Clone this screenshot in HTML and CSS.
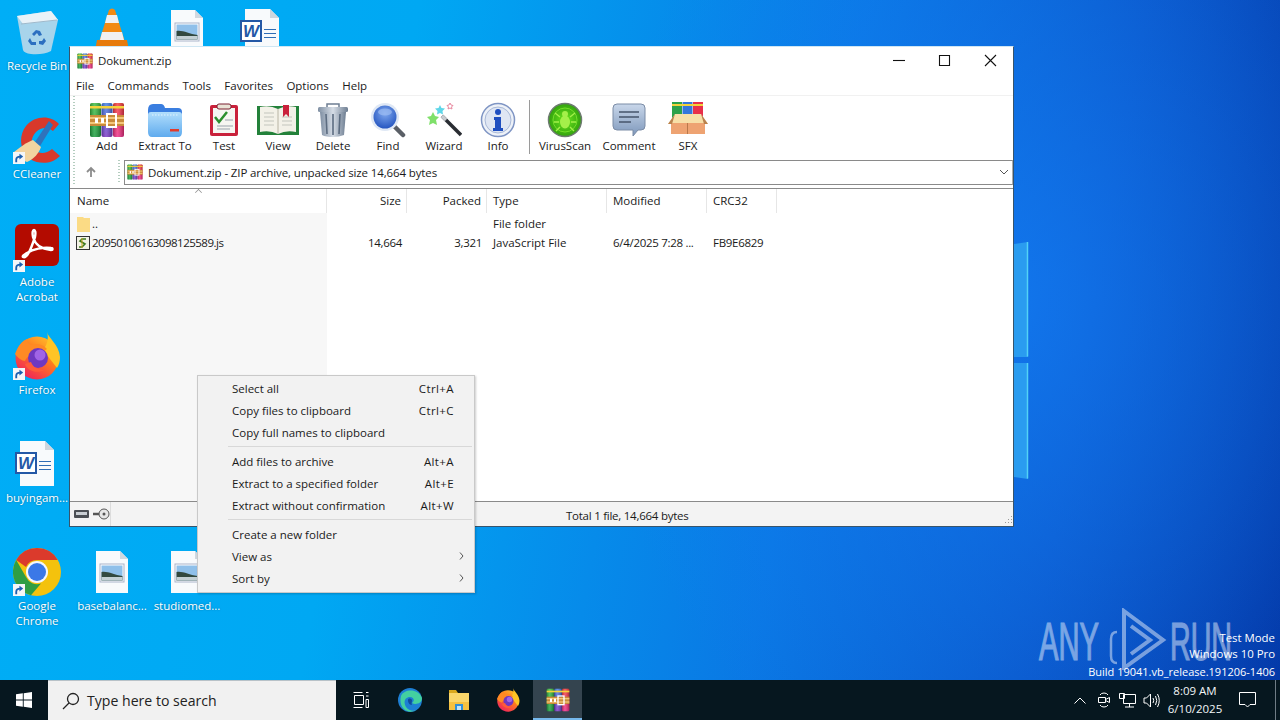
FILE: index.html
```html
<!DOCTYPE html>
<html lang="en">
<head>
<meta charset="utf-8">
<title>Dokument.zip - WinRAR</title>
<link rel="stylesheet" href="styles.css">
</head>
<body>
<svg class="defs" width="0" height="0" aria-hidden="true">
  <defs>
    <linearGradient id="gGreen" x1="0" y1="0" x2="0" y2="1"><stop offset="0" stop-color="#3dbb3f"/><stop offset="1" stop-color="#159a3a"/></linearGradient>
    <linearGradient id="gBlue" x1="0" y1="0" x2="0" y2="1"><stop offset="0" stop-color="#3f7fe6"/><stop offset="1" stop-color="#7a35c4"/></linearGradient>
    <linearGradient id="gRed" x1="0" y1="0" x2="0" y2="1"><stop offset="0" stop-color="#f63a36"/><stop offset="1" stop-color="#ee2a88"/></linearGradient>
    <linearGradient id="gShade" x1="0" y1="0" x2="1" y2="0"><stop offset="0" stop-color="#000" stop-opacity=".28"/><stop offset=".4" stop-color="#fff" stop-opacity=".18"/><stop offset="1" stop-color="#000" stop-opacity=".3"/></linearGradient>
    <linearGradient id="gFolder" x1="0" y1="0" x2="0" y2="1"><stop offset="0" stop-color="#b2defc"/><stop offset="1" stop-color="#5fabee"/></linearGradient>
    <linearGradient id="gMetal" x1="0" y1="0" x2="1" y2="0"><stop offset="0" stop-color="#7f8fa3"/><stop offset=".5" stop-color="#d6dde6"/><stop offset="1" stop-color="#6e7e92"/></linearGradient>
    <radialGradient id="gLens" cx=".5" cy=".35" r=".7"><stop offset="0" stop-color="#7fa8ee"/><stop offset="1" stop-color="#1f50bd"/></radialGradient>
    <radialGradient id="gBug" cx=".5" cy=".5" r=".55"><stop offset="0" stop-color="#6ee81e"/><stop offset="1" stop-color="#2c9a0c"/></radialGradient>
    <linearGradient id="gBubble" x1="0" y1="0" x2="0" y2="1"><stop offset="0" stop-color="#c9d7ea"/><stop offset="1" stop-color="#7d97bb"/></linearGradient>
    <linearGradient id="gFx" x1="1" y1="0" x2=".3" y2="1"><stop offset="0" stop-color="#ffd02e"/><stop offset=".5" stop-color="#ff7a1f"/><stop offset="1" stop-color="#f0245a"/></linearGradient>

    <symbol id="rar" viewBox="0 0 36 36">
      <rect x="1" y="1" width="11" height="34" rx="2" fill="url(#gGreen)"/>
      <rect x="12.500" y="1" width="11" height="34" rx="2" fill="url(#gBlue)"/>
      <rect x="24" y="1" width="11" height="34" rx="2" fill="url(#gRed)"/>
      <rect x="1" y="1" width="11" height="34" rx="2" fill="url(#gShade)"/>
      <rect x="12.500" y="1" width="11" height="34" rx="2" fill="url(#gShade)"/>
      <rect x="24" y="1" width="11" height="34" rx="2" fill="url(#gShade)"/>
      <rect x="1" y="4" width="34" height="2.500" fill="#f5d23c"/>
      <rect x="1" y="13" width="34" height="11" fill="#c98a3a"/>
      <rect x="1" y="15" width="34" height="2" fill="#f3c67a"/>
      <rect x="1" y="20" width="34" height="2" fill="#f3c67a"/>
      <rect x="18" y="12" width="9" height="13" fill="none" stroke="#fff" stroke-width="2"/>
      <rect x="6" y="16" width="3" height="5" fill="#fff"/>
      <rect x="12" y="16" width="3" height="5" fill="#fff"/>
    </symbol>

    <symbol id="shortcut" viewBox="0 0 13 13">
      <rect width="13" height="13" fill="#f4f6f8"/>
      <path d="M3.500 11V8.500C3.500 6 5 5 8 5" fill="none" stroke="#1d5fb0" stroke-width="2"/>
      <path d="M7 2l4 3-4 3z" fill="#1d5fb0"/>
    </symbol>

    <symbol id="imgdoc" viewBox="0 0 32 42">
      <path d="M0 0H24L32 8V42H0z" fill="#f8fafc"/>
      <path d="M24 0L32 8H24z" fill="#d0d8e0"/>
      <rect x="4" y="13" width="24" height="18" fill="#fff" stroke="#a9b3c9"/>
      <rect x="5.500" y="14.500" width="21" height="15" fill="#8fc0ea"/>
      <path d="M5.500 21C12 20 18 24 26.500 25V29.500H5.500z" fill="#32493f"/>
      <path d="M5.500 26H26.500V29.500H5.500z" fill="#c3d0d4"/>
    </symbol>

    <symbol id="worddoc" viewBox="0 0 40 45">
      <path d="M5 0H30L39 9V45H5z" fill="#f8fafc"/>
      <path d="M30 0L39 9H30z" fill="#cfd6dd"/>
      <g stroke="#2f6db5" stroke-width="1"><path d="M24 20.500H36M24 24.500H36M24 28.500H36"/></g>
      <rect x="1" y="12" width="20" height="20" fill="#fff" stroke="#2458a6" stroke-width="2"/>
      <text x="11" y="28" class="wordw">W</text>
    </symbol>

    <symbol id="firefox" viewBox="0 0 48 48">
      <circle cx="24" cy="26" r="21.500" fill="url(#gFx)"/>
      <path d="M34 0c1 6 12 12 13 25 0 4-1 8-3 11L30 18C34 13 36 7 34 0z" fill="#ffc425"/>
      <path d="M2 22C5 14 9 9 14 7c0 3 2 5 4 6 5-2 12-1 16 4l-8 6c-6-2-12 1-14 6-3 0-7-3-10-7z" fill="#ff8a24"/>
      <circle cx="25" cy="26" r="10" fill="#6f38c0"/>
      <circle cx="27" cy="23" r="5.500" fill="#a064e6"/>
      <path d="M12 32c2 7 12 10 20 6-6 0-12-2-14-8z" fill="#ff5b3a"/>
    </symbol>
  </defs>
</svg>

<div class="screen">
  <main class="wall">
    <svg class="beams" viewBox="0 0 18 240" aria-hidden="true">
      <path d="M0 3L14 1V116H0z" class="pane"/>
      <path d="M13.500 1V115.500" class="pane-edge"/>
      <path d="M0 122H14V238L0 236z" class="pane"/>
      <path d="M13.500 122V237.500" class="pane-edge"/>
    </svg>

    <div class="dicon at-recycle">
      <svg class="dglyph" viewBox="0 0 48 48" aria-hidden="true">
        <path d="M4 8L38 3L45 12L38 43Q30 47 18 46Q11 45 10 42z" fill="#c6dbe9" fill-opacity=".85"/>
        <path d="M4 8L38 3L45 12L10 16z" fill="#e9f2f8"/>
        <path d="M8 16L44 12" stroke="#9fb9cb" fill="none"/>
        <path d="M23 22l4 1 2 4-3 1-2-3-3 3-2-2zM31 30l2 3-3 4-4-1v-3h3zM17 30l2 4 4 0 0 3-5 0-3-4z" fill="#2c6fc0"/>
      </svg>
      <span class="dlabel">Recycle Bin</span>
    </div>
    <div class="dicon at-vlc">
      <svg class="dglyph" viewBox="0 0 48 48" aria-hidden="true">
        <path d="M21 2Q24 -1 27 2L37 34H11z" fill="#f28a12"/>
        <path d="M19 7H29L31 15H17z" fill="#f0f0f0"/>
        <path d="M14 24H34L36 32H12z" fill="#f0f0f0"/>
        <path d="M9 32H39L42 48H6z" fill="#e77b0c"/>
      </svg>
    </div>
    <div class="dicon at-img1"><svg class="dglyph-doc" aria-hidden="true"><use href="#imgdoc"/></svg></div>
    <div class="dicon at-word1"><svg class="dglyph-word" aria-hidden="true"><use href="#worddoc"/></svg></div>

    <div class="dicon at-ccleaner">
      <div class="dbox">
        <svg class="dglyph" viewBox="0 0 48 48" aria-hidden="true">
          <path d="M46 8C38-1 22-1 13 10 5 20 7 36 17 43c10 6 22 5 30-3l-8-7c-6 5-13 5-17 1-5-5-4-13 1-18 5-5 12-5 17-1z" fill="#d8392b"/>
          <path d="M36 5L22 26l5 4L40 9z" fill="#2f73bb"/>
          <path d="M20 24c-6 2-14 8-19 12 2 4 8 8 13 10 7-3 12-9 14-15z" fill="#f2d4a0"/>
        </svg>
        <svg class="shortcut" aria-hidden="true"><use href="#shortcut"/></svg>
      </div>
      <span class="dlabel">CCleaner</span>
    </div>
    <div class="dicon at-acrobat">
      <div class="dbox">
        <svg class="dglyph" viewBox="0 0 48 48" aria-hidden="true">
          <rect x="2" y="0" width="44" height="42" rx="6" fill="#b30b00"/>
          <path d="M10 33c4 2 8-8 12-20 1-5 0-7-1-7s-2 2-1 7c2 7 7 12 18 13 2 0 2-2 0-2-8-1-18 1-24 5-3 2-5 3-4 4z" fill="none" stroke="#fff" stroke-width="2.400"/>
        </svg>
        <svg class="shortcut" aria-hidden="true"><use href="#shortcut"/></svg>
      </div>
      <span class="dlabel">Adobe<br>Acrobat</span>
    </div>
    <div class="dicon at-firefox">
      <div class="dbox">
        <svg class="dglyph" aria-hidden="true"><use href="#firefox"/></svg>
        <svg class="shortcut" aria-hidden="true"><use href="#shortcut"/></svg>
      </div>
      <span class="dlabel">Firefox</span>
    </div>
    <div class="dicon at-word2">
      <svg class="dglyph-word" aria-hidden="true"><use href="#worddoc"/></svg>
      <span class="dlabel">buyingam...</span>
    </div>
    <div class="dicon at-chrome">
      <div class="dbox">
        <svg class="dglyph" viewBox="0 0 48 48" aria-hidden="true">
          <circle cx="24" cy="24" r="24" fill="#f4c20d"/>
          <path d="M24 0A24 24 0 0 1 44.800 12H24A12 12 0 0 0 13 19L3.200 12A24 24 0 0 1 24 0z" fill="#db3a2c"/>
          <path d="M3.200 12L13 29A12 12 0 0 0 28 35.500L18 47.300A24 24 0 0 1 3.200 12z" fill="#2f9e44"/>
          <circle cx="24" cy="24" r="11" fill="#f5f7fb"/>
          <circle cx="24" cy="24" r="9" fill="#3b78e7"/>
        </svg>
        <svg class="shortcut" aria-hidden="true"><use href="#shortcut"/></svg>
      </div>
      <span class="dlabel">Google<br>Chrome</span>
    </div>
    <div class="dicon at-img2">
      <svg class="dglyph-doc" aria-hidden="true"><use href="#imgdoc"/></svg>
      <span class="dlabel">basebalanc...</span>
    </div>
    <div class="dicon at-img3">
      <svg class="dglyph-doc" aria-hidden="true"><use href="#imgdoc"/></svg>
      <span class="dlabel">studiomed...</span>
    </div>

    <div class="watermark">
      <span class="wm-word wm-any">ANY</span>
      <svg class="wm-svg" viewBox="0 0 60 62" aria-hidden="true">
        <path d="M8 24Q2 24 2 31V48Q2 55 8 55" class="wm-line"/>
        <path d="M15 3L54 32L15 60zM22 18L41 32L22 46" class="wm-line wm-thick"/>
      </svg>
      <span class="wm-word wm-run">RUN</span>
    </div>
    <div class="testmode">
      <div>Test Mode</div>
      <div>Windows 10 Pro</div>
      <div class="build">Build 19041.vb_release.191206-1406</div>
    </div>

    <section class="window">
      <header class="titlebar">
        <svg class="ico16" aria-hidden="true"><use href="#rar"/></svg>
        <span class="title">Dokument.zip</span>
        <div class="winctl">
          <svg class="ctl" viewBox="0 0 46 20" aria-hidden="true"><path d="M18 10.500H30"/></svg>
          <svg class="ctl" viewBox="0 0 46 20" aria-hidden="true"><path d="M18.500 5.500H28.500V15.500H18.500z"/></svg>
          <svg class="ctl" viewBox="0 0 46 20" aria-hidden="true"><path d="M18 5L29 16M29 5L18 16"/></svg>
        </div>
      </header>
      <nav class="menubar">
        <span>File</span><span>Commands</span><span>Tools</span><span>Favorites</span><span>Options</span><span>Help</span>
      </nav>
      <div class="toolbar">
        <div class="tool">
          <svg class="tico" aria-hidden="true"><use href="#rar"/></svg>
          <span>Add</span>
        </div>
        <div class="tool">
          <svg class="tico" viewBox="0 0 36 36" aria-hidden="true">
            <path d="M1 8Q1 2 6 2H14Q17 2 18 6H31Q35 6 35 10V30H1z" fill="#3a7ee0"/>
            <path d="M1 13Q1 10 4 10H32Q35 10 35 13V30Q35 35 31 35H5Q1 35 1 30z" fill="url(#gFolder)"/>
            <path d="M5 13H31" stroke="#e2f2fd" stroke-dasharray="1.500 1.500" fill="none"/>
            <rect x="23" y="27" width="9" height="2.500" fill="#e23a2a"/>
          </svg>
          <span>Extract To</span>
        </div>
        <div class="tool">
          <svg class="tico" viewBox="0 0 36 36" aria-hidden="true">
            <rect x="4" y="3" width="28" height="31" rx="2" fill="#c9213b"/>
            <rect x="7" y="6" width="22" height="25" fill="#f6f6f2"/>
            <rect x="11" y="2" width="14" height="5" rx="2" fill="#e9e3d6" stroke="#7a2030"/>
            <path d="M9 15L13 20L21 10" fill="none" stroke="#2b8f2e" stroke-width="2.500"/>
            <path d="M19 18H27M11 24H27M11 27H24" stroke="#9aa3ad"/>
          </svg>
          <span>Test</span>
        </div>
        <div class="tool">
          <svg class="tico tico-view" viewBox="0 0 44 36" aria-hidden="true">
            <path d="M1 4H43V33H1z" fill="#23813a"/>
            <path d="M4 5Q14 3 22 7Q30 3 40 5V30Q30 28 22 32Q14 28 4 30z" fill="#f3f1e8"/>
            <path d="M22 7V32" stroke="#b8b4a4"/>
            <path d="M8 11H18M8 15H18M8 19H18M8 23H18M26 15H36M26 19H36M26 23H36" stroke="#c3c5bd"/>
            <path d="M27 3H33V15L30 12L27 15z" fill="#c9213b"/>
          </svg>
          <span>View</span>
        </div>
        <div class="tool">
          <svg class="tico" viewBox="0 0 36 36" aria-hidden="true">
            <path d="M12 5V2H24V5" fill="none" stroke="#6e7e92" stroke-width="1.500"/>
            <rect x="3" y="5" width="30" height="5" rx="1.500" fill="url(#gMetal)"/>
            <path d="M5 10H31L29 33Q24 35 18 35Q11 35 7 33z" fill="url(#gMetal)"/>
            <path d="M11 12L12 32M18 12V33M25 12L24 32" stroke="#5c6c80" stroke-width="1.600"/>
          </svg>
          <span>Delete</span>
        </div>
        <div class="tool">
          <svg class="tico" viewBox="0 0 36 36" aria-hidden="true">
            <path d="M23 23L33 33" stroke="#5a5f66" stroke-width="4.500" stroke-linecap="round"/>
            <circle cx="15" cy="15" r="14" fill="#dfe8f5"/>
            <circle cx="15" cy="15" r="11.500" fill="url(#gLens)"/>
            <ellipse cx="15" cy="10" rx="7" ry="3.500" fill="#9dbcf2" fill-opacity=".7"/>
          </svg>
          <span>Find</span>
        </div>
        <div class="tool">
          <svg class="tico" viewBox="0 0 36 36" aria-hidden="true">
            <path d="M16 14L35 33" stroke="#2a2d33" stroke-width="3.500"/>
            <path d="M16 14L20 18" stroke="#c9ccd1" stroke-width="3.500"/>
            <path transform="translate(-2 -4)" d="M9 14l2 4 4 1-3 3 1 5-4-2-4 2 1-5-3-3 4-1z" fill="#7fe06a"/>
            <path transform="translate(-6 0)" d="M20 3l1.500 3 3.500.5-2.500 2.500.5 3.500-3-1.500-3 1.500.5-3.500L15 6.500l3.500-.5z" fill="#5fd6e8"/>
            <path transform="translate(-6 0)" d="M30 1l1 2 2 .5-1.500 1.500.5 2-2-1-2 1 .5-2L27 3.500l2-.5z" fill="none" stroke="#e88aa0"/>
          </svg>
          <span>Wizard</span>
        </div>
        <div class="tool">
          <svg class="tico" viewBox="0 0 36 36" aria-hidden="true">
            <circle cx="18" cy="18" r="16.500" fill="#eef2f8" stroke="#7f95c4" stroke-width="1.500"/>
            <circle cx="18" cy="18" r="13" fill="#dfe6f3" stroke="#a9b9d8"/>
            <circle cx="18" cy="10" r="3" fill="#1f4fc0"/>
            <path d="M14 15H21V26H23V29H13V26H15V18H14z" fill="#1f4fc0"/>
          </svg>
          <span>Info</span>
        </div>
        <div class="tsep"></div>
        <div class="tool">
          <svg class="tico" viewBox="0 0 36 36" aria-hidden="true">
            <circle cx="18" cy="18" r="16.500" fill="url(#gBug)" stroke="#6d7a70" stroke-width="1.500"/>
            <circle cx="18" cy="18" r="12" fill="none" stroke="#7fe830" stroke-width=".8"/>
            <ellipse cx="18" cy="20" rx="5" ry="6.500" fill="#a4f04a"/>
            <circle cx="18" cy="12" r="3" fill="#a4f04a"/>
            <path d="M13 15L8 11M23 15L28 11M12 20H7M24 20H29M13 25L9 29M23 25L27 29" stroke="#a4f04a" stroke-width="1.400"/>
          </svg>
          <span>VirusScan</span>
        </div>
        <div class="tool">
          <svg class="tico" viewBox="0 0 36 36" aria-hidden="true">
            <path d="M6 2H30Q34 2 34 6V24Q34 28 30 28H27L22 34V28H6Q2 28 2 24V6Q2 2 6 2z" fill="url(#gBubble)" stroke="#7b8ca6"/>
            <path d="M8 10H28M8 15H28M8 20H20" stroke="#45546b" stroke-width="1.600"/>
          </svg>
          <span>Comment</span>
        </div>
        <div class="tool">
          <svg class="tico tico-wide" viewBox="0 0 42 36" aria-hidden="true">
            <rect x="5" y="0" width="10" height="16" fill="#2ca24a"/>
            <rect x="15.500" y="0" width="10" height="16" fill="#3477dc"/>
            <rect x="26" y="0" width="10" height="16" fill="#e8304a"/>
            <rect x="5" y="2" width="31" height="2" fill="#f2d23c"/>
            <path d="M8 12H34L41 22H1z" fill="#f7dfa8"/>
            <path d="M4 21H38V32H4z" fill="#eea372"/>
            <path d="M8 12L1 22H5zM34 12L41 22H37z" fill="#b9824e"/>
            <path d="M20.500 21V32" stroke="#b9784a"/>
          </svg>
          <span>SFX</span>
        </div>
      </div>

      <div class="addressrow">
        <svg class="uparrow" viewBox="0 0 12 12" aria-hidden="true"><path d="M6 11V2M2 6L6 2L10 6"/></svg>
        <div class="agrip"></div>
        <div class="combo">
          <svg class="ico16" aria-hidden="true"><use href="#rar"/></svg>
          <span class="combotext">Dokument.zip - ZIP archive, unpacked size 14,664 bytes</span>
          <svg class="combochev" viewBox="0 0 10 6" aria-hidden="true"><path d="M1 1L5 5L9 1"/></svg>
        </div>
      </div>

      <div class="listing">
        <div class="lrow lhead">
          <div class="cell first"><span class="sortup"></span>Name</div>
          <div class="cell num">Size</div>
          <div class="cell num">Packed</div>
          <div class="cell">Type</div>
          <div class="cell">Modified</div>
          <div class="cell">CRC32</div>
        </div>
        <div class="lbody">
          <div class="lrow">
            <div class="cell first"><svg class="ico16 fold" viewBox="0 0 16 16" aria-hidden="true"><path d="M2 1H8L9 2H15V16H2z" fill="#fbdb85"/></svg>..</div>
            <div class="cell num"></div><div class="cell num"></div>
            <div class="cell">File folder</div><div class="cell"></div><div class="cell"></div>
          </div>
          <div class="lrow">
            <div class="cell first"><svg class="ico16 fold" viewBox="0 0 16 16" aria-hidden="true"><rect x="1.500" y="1.500" width="13" height="13" fill="#f2f2e4" stroke="#333"/><path d="M11 4H7L5 6L10 9L7 12H4" fill="none" stroke="#3c7a1e" stroke-width="1.600"/><path d="M7 3V13" stroke="#c9a21c"/></svg><span class="t-name">20950106163098125589.js</span></div>
            <div class="cell num t-num">14,664</div>
            <div class="cell num t-num">3,321</div>
            <div class="cell">JavaScript File</div>
            <div class="cell t-num">6/4/2025 7:28 ...</div>
            <div class="cell t-num">FB9E6829</div>
          </div>
        </div>
      </div>

      <footer class="statusbar">
        <div class="st-icons">
          <svg class="st-svg" viewBox="0 0 36 14" aria-hidden="true">
            <rect x="0" y="3" width="15" height="8" rx="1" fill="#4b4f54"/>
            <rect x="2" y="5" width="11" height="3" fill="#c9ced3"/>
            <path d="M19 7H27" stroke="#555" stroke-width="2.500"/>
            <circle cx="30" cy="7" r="5" fill="#e6e6e6" stroke="#555"/>
            <circle cx="30" cy="7" r="1.500" fill="#555"/>
          </svg>
        </div>
        <div class="st-total">Total 1 file, 14,664 bytes</div>
        <svg class="st-grip" viewBox="0 0 10 10" aria-hidden="true">
          <path d="M8 1h1v1H8zM5 4h1v1H5zM8 4h1v1H8zM2 7h1v1H2zM5 7h1v1H5zM8 7h1v1H8z" fill="#9a9a9a"/>
        </svg>
      </footer>
    </section>

    <div class="menu">
      <div class="mitem"><span>Select all</span><span class="key">Ctrl+A</span></div>
      <div class="mitem"><span>Copy files to clipboard</span><span class="key">Ctrl+C</span></div>
      <div class="mitem"><span>Copy full names to clipboard</span></div>
      <div class="msep"></div>
      <div class="mitem"><span>Add files to archive</span><span class="key">Alt+A</span></div>
      <div class="mitem"><span>Extract to a specified folder</span><span class="key">Alt+E</span></div>
      <div class="mitem"><span>Extract without confirmation</span><span class="key">Alt+W</span></div>
      <div class="msep"></div>
      <div class="mitem"><span>Create a new folder</span></div>
      <div class="mitem"><span>View as</span><svg class="msub" viewBox="0 0 5 8" aria-hidden="true"><path d="M1 0.500L4 4L1 7.500"/></svg></div>
      <div class="mitem"><span>Sort by</span><svg class="msub" viewBox="0 0 5 8" aria-hidden="true"><path d="M1 0.500L4 4L1 7.500"/></svg></div>
    </div>
  </main>

  <footer class="taskbar">
    <div class="start">
      <svg class="startlogo" viewBox="0 0 16 16" aria-hidden="true"><path d="M0 2.300L6.800 1.300V7.500H0zM7.700 1.200L16 0V7.500H7.700zM0 8.400H6.800V14.700L0 13.700zM7.700 8.400H16V16L7.700 14.800z" fill="#fff"/></svg>
    </div>
    <div class="search">
      <svg class="searchico" viewBox="0 0 18 18" aria-hidden="true"><circle cx="11" cy="7" r="5.500"/><path d="M7 11L1 17"/></svg>
      <span>Type here to search</span>
    </div>
    <div class="tasks">
      <div class="task">
        <svg class="taskview" viewBox="0 0 16 16" aria-hidden="true"><path d="M0.500 0.500H9.500M0.500 15.500H9.500M1.500 3.500H10.500V12.500H1.500zM13 0.500H15.500M13 4H15.500M13 7.500H15.500V15.500H13z"/></svg>
      </div>
      <div class="task">
        <svg class="tkico" viewBox="0 0 24 24" aria-hidden="true">
          <circle cx="12" cy="12" r="12" fill="#1d7fd4"/>
          <path d="M3 8C6 1 20 0 24 10C24 16 17 17 14 15C17 13 16 9 12 9C7 9 5 14 8 19C10 22 15 24 18 22C10 27 0 20 3 8z" fill="#43d0a0"/>
          <path d="M10 12C10 10 13 10 14 12C14 14 13 16 14 17C11 17 10 14 10 12z" fill="#0f4d9c"/>
        </svg>
      </div>
      <div class="task">
        <svg class="tkico" viewBox="0 0 24 24" aria-hidden="true">
          <path d="M2 2H9L11 5H22V10H2z" fill="#d9a81e"/>
          <rect x="2" y="5" width="20" height="17" fill="#f9d66a"/>
          <rect x="2" y="14" width="20" height="8" fill="#f4c141"/>
          <path d="M8 16H16V22H8z" fill="#2f8fd8"/>
          <rect x="10" y="18" width="4" height="4" fill="#bfe3f8"/>
        </svg>
      </div>
      <div class="task">
        <svg class="tkico" aria-hidden="true"><use href="#firefox"/></svg>
      </div>
      <div class="task active">
        <svg class="tkico" aria-hidden="true"><use href="#rar"/></svg>
      </div>
    </div>
    <div class="tray">
      <svg class="tr tr-chev" viewBox="0 0 12 7" aria-hidden="true"><path d="M0.500 6.500L6 1L11.500 6.500"/></svg>
      <svg class="tr tr-meet" viewBox="0 0 16 16" aria-hidden="true"><path d="M4 3Q5 1 8 1T12 3M4 13Q5 15 8 15T12 13M2.500 5.500H9.500V10.500H2.500zM9.500 7.500L13.500 5.500V10.500L9.500 8.500"/></svg>
      <svg class="tr tr-net" viewBox="0 0 17 15" aria-hidden="true"><path d="M4.500 1.500H16.500V10.500H4.500zM10.500 10.500V14M6 14H15M0.500 0.500H5.500V5.500H0.500z"/></svg>
      <svg class="tr tr-vol" viewBox="0 0 17 15" aria-hidden="true"><path d="M1 5H3.500L7.500 1V14L3.500 10H1zM10 5Q11.500 7.500 10 10M12.500 3Q15 7.500 12.500 12M14.500 1Q18 7.500 14.500 14"/></svg>
      <div class="clock"><div>8:09 AM</div><div>6/10/2025</div></div>
      <svg class="tr tr-note" viewBox="0 0 17 16" aria-hidden="true"><path d="M0.500 0.500H16.500V12.500H11L8.500 15L6 12.500H0.500z"/></svg>
      <div class="showdesk"></div>
    </div>
  </footer>
</div>
</body>
</html>
```

FILE: styles.css
```css
* { box-sizing: border-box; }
html, body { margin: 0; padding: 0; }
body {
  width: 1280px;
  height: 720px;
  overflow: hidden;
  font-family: "Open Sans", "Noto Sans", sans-serif;
  font-size: 11.500px;
  color: #1a1a1a;
}
.defs { position: absolute; }
.wordw { font: italic bold 17px "Liberation Sans", sans-serif; fill: #2458a6; text-anchor: middle; }

.screen { width: 1280px; height: 720px; display: flex; flex-direction: column; }
.wall {
  position: relative;
  flex: 1;
  overflow: hidden;
  background:
    radial-gradient(ellipse 420px 520px at 1010px 300px, rgba(20,125,245,.75), rgba(20,125,245,0) 100%),
    linear-gradient(100deg, #00aef6 0%, #00a8f3 30%, #0a78e4 62%, #0a55c8 82%, #0337a6 100%);
}
.beams { position: absolute; left: 1014px; top: 241px; width: 18px; height: 240px; }
.pane { fill: #2a9cf0; }
.pane-edge { stroke: #52d2f6; stroke-width: 1.500; fill: none; }

/* desktop icons */
.dicon {
  position: absolute;
  width: 76px;
  display: flex;
  flex-direction: column;
  align-items: center;
  color: #fff;
}
.dglyph { width: 48px; height: 48px; display: block; }
.dglyph-doc { width: 32px; height: 42px; margin: 3px 0 3px; display: block; }
.dglyph-word { width: 40px; height: 45px; margin: 1px 0 2px -4px; display: block; }
.dbox { position: relative; width: 48px; height: 48px; }
.shortcut { position: absolute; left: 0; bottom: 0; width: 12px; height: 12px; }
.dlabel {
  margin-top: 2px;
  line-height: 15px;
  font-size: 11.500px;
  text-align: center;
  white-space: nowrap;
  text-shadow: 0 0 2px rgba(0,0,0,.35);
}
.at-recycle { left: -1px; top: 8px; }
.at-vlc { left: 74px; top: 8px; }
.at-img1 { left: 149px; top: 7px; }
.at-word1 { left: 224px; top: 8px; }
.at-ccleaner { left: -1px; top: 116px; }
.at-acrobat { left: -1px; top: 224px; }
.at-firefox { left: -1px; top: 332px; }
.at-word2 { left: -1px; top: 440px; }
.at-chrome { left: -1px; top: 548px; }
.at-img2 { left: 74px; top: 548px; }
.at-img3 { left: 149px; top: 548px; }

/* watermark + build text */
.watermark { position: absolute; left: 1039px; top: 608px; width: 195px; height: 62px; opacity: .45; color: #fff; }
.wm-svg { position: absolute; left: 70px; top: 0; width: 60px; height: 62px; display: block; }
.wm-word {
  position: absolute;
  top: 2px;
  font: 54px/62px "Liberation Sans", sans-serif;
  -webkit-text-stroke: 1.200px #fff;
  transform-origin: 0 0;
  white-space: nowrap;
}
.wm-any { left: 0; transform: scaleX(.54); }
.wm-run { left: 131px; transform: scaleX(.53); }
.wm-line { fill: none; stroke: #fff; stroke-width: 2.500; }
.wm-thick { stroke-width: 4; }
.testmode {
  position: absolute;
  right: 5px;
  top: 630px;
  text-align: right;
  color: #fff;
  font-size: 11.400px;
  line-height: 16px;
}
.build { margin-top: 2px; font-size: 11px; }

/* window */
.window {
  position: absolute;
  left: 69px;
  top: 46px;
  width: 945px;
  height: 481px;
  background: #fff;
  border: 1px solid #37546c;
  border-top-color: #cfe6f3;
  display: flex;
  flex-direction: column;
}
.titlebar { height: 27px; display: flex; align-items: center; padding-left: 7px; flex: none; }
.ico16 { width: 16px; height: 16px; flex: none; display: block; }
.title { margin-left: 5px; letter-spacing: -.14px; }
.winctl { margin-left: auto; display: flex; }
.ctl { width: 46px; height: 20px; display: block; margin-top: -2px; }
.ctl path { fill: none; stroke: #111; stroke-width: 1.100; }
.menubar { height: 22px; display: flex; align-items: center; padding: 2px 0 0 6px; gap: 13.400px; flex: none; border-bottom: 1px solid #f1f1f1; }
.toolbar {
  height: 63px;
  flex: none;
  margin-left: 3px;
  padding-left: 7px;
  display: grid;
  grid-template-columns: 54px 62px 56px 52px 58px 52px 60px 48px 14px 58px 70px 48px;
  grid-template-rows: 1fr;
  background-image: repeating-linear-gradient(#b4cdbf 0 1px, transparent 1px 3px);
  background-size: 2px 100%;
  background-repeat: no-repeat;
}
.tool { display: flex; flex-direction: column; align-items: center; padding-top: 6px; }
.tool span { line-height: 16px; white-space: nowrap; }
.tico { width: 36px; height: 36px; display: block; }
.tico-wide { width: 42px; }
.tico-view { width: 44px; }
.tsep { width: 1px; height: 54px; margin: 4px auto 0; background: #9a9a9a; }

.addressrow {
  height: 26px;
  flex: none;
  display: flex;
  align-items: center;
  background-image: repeating-linear-gradient(#b4cdbf 0 1px, transparent 1px 3px);
  background-size: 2px 100%;
  background-position: 3px 0;
  background-repeat: no-repeat;
}
.uparrow { width: 12px; height: 12px; margin-left: 15px; fill: none; stroke: #8c8c8c; stroke-width: 1.800; }
.agrip {
  width: 2px;
  height: 24px;
  margin-left: 21px;
  background-image: repeating-linear-gradient(#b4cdbf 0 1px, transparent 1px 3px);
}
.combo {
  margin-left: 4px;
  flex: 1;
  height: 25px;
  border: 1px solid #8a8a8a;
  border-right-color: #aaa;
  display: flex;
  align-items: center;
  padding: 0 3px 0 2px;
}
.combotext { margin-left: 5px; padding-top: 1px; letter-spacing: -.12px; }
.combochev { margin-left: auto; width: 10px; height: 6px; fill: none; stroke: #555; stroke-width: 1; }

.listing {
  flex: 1;
  min-height: 0;
  margin-top: 3px;
  border-top: 1px solid #8a8a8a;
  display: flex;
  flex-direction: column;
}
.lrow {
  display: grid;
  grid-template-columns: 257px 80px 80px 120px 100px 70px;
  height: 19px;
  align-items: stretch;
}
.lhead { height: 24px; flex: none; }
.cell {
  padding: 0 6px;
  white-space: nowrap;
  overflow: hidden;
  display: flex;
  align-items: center;
}
.lhead .cell { border-right: 1px solid #e6e6e6; position: relative; padding-bottom: 1px; }
.first { padding-left: 7px; }
.lbody { flex: 1; padding-top: 1px; background: linear-gradient(#f7f7f7, #f7f7f7) 0 0 / 257px 100% no-repeat; }
.num { justify-content: flex-end; padding-right: 5px; }
.fold { margin-right: 1px; margin-left: -2px; }
.t-name { letter-spacing: -.5px; }
.t-num { letter-spacing: -.3px; }
.sortup {
  position: absolute;
  left: 125px;
  top: 0;
  width: 7px;
  height: 7px;
  border-left: 1px solid #888;
  border-top: 1px solid #888;
  transform: rotate(45deg) scale(.7);
}

.statusbar {
  height: 25px;
  flex: none;
  border-top: 1px solid #8a8a8a;
  background: #f3f3f3;
  display: flex;
  align-items: center;
  position: relative;
}
.st-icons { width: 41px; height: 100%; display: flex; align-items: center; padding-left: 4px; border-right: 1px solid #dcdcdc; flex: none; }
.st-svg { width: 36px; height: 14px; display: block; }
.st-total { margin-left: 455px; padding-top: 2px; letter-spacing: -.25px; }
.st-grip { width: 10px; height: 10px; margin-left: auto; align-self: flex-end; margin-bottom: 1px; }

/* context menu */
.menu {
  position: absolute;
  left: 197px;
  top: 375px;
  width: 278px;
  height: 218px;
  background: #f2f2f2;
  border: 1px solid #c9c9c9;
  padding: 1px 0 0;
  box-shadow: 1px 1px 2px rgba(0,0,0,.2);
}
.mitem {
  height: 22px;
  display: flex;
  align-items: center;
  padding: 0 20px 0 34px;
  position: relative;
}
.key { margin-left: auto; letter-spacing: .4px; }
.msep { height: 7px; margin: 0 2px 0 30px; background: linear-gradient(#d8d8d8, #d8d8d8) 0 3px / 100% 1px no-repeat; }
.msub { width: 5px; height: 8px; position: absolute; right: 10px; top: 7px; fill: none; stroke: #555; stroke-width: 1; }

/* taskbar */
.taskbar { height: 40px; flex: none; display: flex; background: #06171f; color: #fff; }
.start { width: 48px; display: flex; align-items: center; justify-content: center; flex: none; }
.startlogo { width: 16px; height: 16px; }
.search {
  width: 288px;
  flex: none;
  background: #f1f1f1;
  color: #222;
  display: flex;
  align-items: center;
  font-size: 14.100px;
  padding-left: 14px;
  border-top: 1px solid #b8c2c8;
}
.searchico { width: 18px; height: 18px; fill: none; stroke: #222; stroke-width: 1.300; }
.search span { margin-left: 7px; }
.tasks { display: grid; grid-template-columns: 49px 50px 48px 50px 49px; flex: none; }
.task { display: flex; align-items: center; justify-content: center; }
.active { background: #34444f; border-bottom: 2px solid #76b9ed; padding-top: 2px; }
.taskview { width: 16px; height: 16px; fill: none; stroke: #fff; stroke-width: 1; }
.tkico { width: 24px; height: 24px; display: block; }
.tray { margin-left: auto; display: flex; align-items: center; position: relative; }
.tr { fill: none; stroke: #fff; stroke-width: 1; display: block; flex: none; }
.tr-chev { width: 12px; height: 7px; margin-right: 10px; }
.tr-meet { width: 16px; height: 16px; margin-right: 7.500px; }
.tr-net { width: 17px; height: 15px; margin-right: 7px; }
.tr-vol { width: 17px; height: 15px; }
.clock { width: 70px; text-align: center; font-size: 11.500px; line-height: 18px; color: #f2f5f7; }
.tr-note { width: 17px; height: 16px; margin: 0 19.500px 0 8.500px; }
.showdesk { width: 5px; height: 100%; border-left: 1px solid #6f7c85; flex: none; }
```
